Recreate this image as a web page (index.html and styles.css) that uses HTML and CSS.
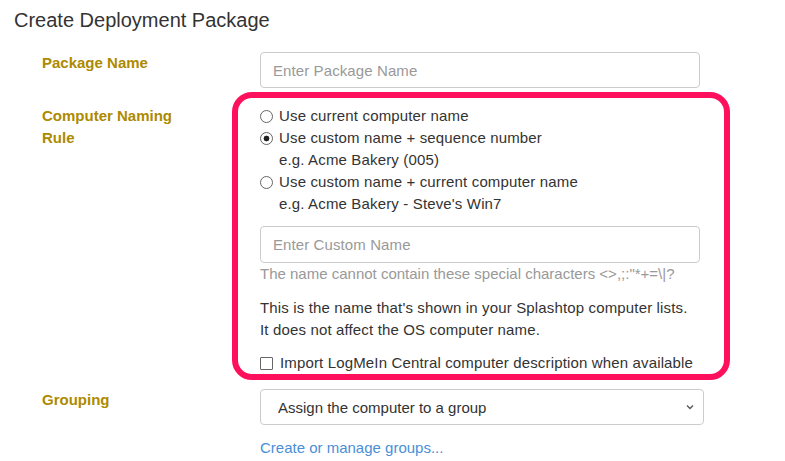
FILE: index.html
```html
<!DOCTYPE html>
<html lang="en">
<head>
<meta charset="utf-8">
<title>Create Deployment Package</title>
<link rel="stylesheet" href="styles.css">
</head>
<body>
<h1 class="title">Create Deployment Package</h1>
<form class="form">
  <div class="row row-name">
    <label class="label">Package Name</label>
    <div class="field">
      <input class="input" type="text" placeholder="Enter Package Name">
    </div>
  </div>
  <div class="row row-naming">
    <label class="label label-naming">Computer Naming Rule</label>
    <div class="field">
      <div class="highlight">
        <div class="options">
          <label class="option"><input class="radio" type="radio" name="rule"><span>Use current computer name</span></label>
          <label class="option"><input class="radio" type="radio" name="rule" checked><span>Use custom name + sequence number</span></label>
          <div class="example">e.g. Acme Bakery (005)</div>
          <label class="option"><input class="radio" type="radio" name="rule"><span>Use custom name + current computer name</span></label>
          <div class="example">e.g. Acme Bakery - Steve's Win7</div>
        </div>
        <input class="input input-custom" type="text" placeholder="Enter Custom Name">
        <div class="hint">The name cannot contain these special characters &lt;&gt;,;:"*+=\|?</div>
        <p class="note">This is the name that's shown in your Splashtop computer lists.<br>It does not affect the OS computer name.</p>
        <label class="option check-option"><input class="checkbox" type="checkbox"><span>Import LogMeIn Central computer description when available</span></label>
      </div>
    </div>
  </div>
  <div class="row row-group">
    <label class="label">Grouping</label>
    <div class="field">
      <div class="select-wrap">
        <select class="select">
          <option>Assign the computer to a group</option>
        </select>
        <svg class="chevron" width="8" height="6" viewBox="0 0 8 6" aria-hidden="true"><path d="M1 1.5 L4 4.5 L7 1.5" fill="none" stroke="#555" stroke-width="1.3"/></svg>
      </div>
      <a class="link" href="#">Create or manage groups...</a>
    </div>
  </div>
</form>
</body>
</html>
```
FILE: styles.css
```css
* { box-sizing: border-box; }

html, body {
  margin: 0;
  padding: 0;
  background: #fff;
}

body {
  font-family: "Liberation Sans", Arial, sans-serif;
  font-size: 15px;
  line-height: 22px;
  color: #333;
}

.title {
  margin: 0;
  padding: 8px 0 0 14px;
  font-size: 20px;
  font-weight: normal;
  line-height: 24px;
  color: #333;
}

.form {
  padding-left: 42px;
  margin-top: 20px;
}

.row {
  display: grid;
  grid-template-columns: 218px 440px;
}

.row-name { margin-bottom: 4px; }
.row-naming { margin-bottom: 9px; }

.label {
  font-weight: bold;
  color: #ad8a00;
  line-height: 22px;
  max-width: 150px;
}

.label-naming { padding-top: 13px; }

.field {
  display: flex;
  flex-direction: column;
}

.input {
  display: block;
  width: 440px;
  height: 36px;
  padding: 0 12px;
  border: 1px solid #ccc;
  border-radius: 4px;
  font-family: inherit;
  font-size: 15px;
  letter-spacing: 0.1px;
  color: #333;
  background: #fff;
}

.input::placeholder { color: #999; }

.highlight {
  margin-left: -28px;
  width: 498px;
  border: 6px solid #ff105c;
  border-radius: 20px;
  padding: 7px 24px 0 22px;
}

.options {
  display: flex;
  flex-direction: column;
}

.option {
  display: flex;
  align-items: center;
  gap: 6px;
  line-height: 22px;
  letter-spacing: 0.15px;
}

.radio {
  appearance: none;
  -webkit-appearance: none;
  margin: 0;
  width: 13px;
  height: 13px;
  border: 1px solid #666;
  border-radius: 50%;
  background: #fff;
  flex: none;
}

.radio:checked {
  background: radial-gradient(circle, #222 0, #222 2.6px, #fff 3.2px);
}

.example {
  padding-left: 19px;
  letter-spacing: 0.15px;
}

.input-custom {
  margin-top: 11px;
  height: 37px;
}

.hint {
  color: #999;
}

.note {
  margin: 12px 0 0;
  letter-spacing: 0.15px;
}

.check-option {
  margin-top: 11px;
  gap: 7px;
}

.checkbox {
  appearance: none;
  -webkit-appearance: none;
  margin: 0;
  width: 13px;
  height: 13px;
  border: 1px solid #666;
  border-radius: 1px;
  background: #fff;
  flex: none;
}

.select-wrap {
  position: relative;
  width: 444px;
}

.select {
  appearance: none;
  -webkit-appearance: none;
  display: block;
  width: 444px;
  height: 36px;
  padding: 0 30px 0 17px;
  border: 1px solid #ccc;
  border-radius: 4px;
  background: #fff;
  font-family: inherit;
  font-size: 15px;
  color: #333;
}

.chevron {
  position: absolute;
  right: 10px;
  top: 15px;
}

.link {
  margin-top: 12px;
  color: #4a8fd6;
  text-decoration: none;
  line-height: 22px;
}
```
